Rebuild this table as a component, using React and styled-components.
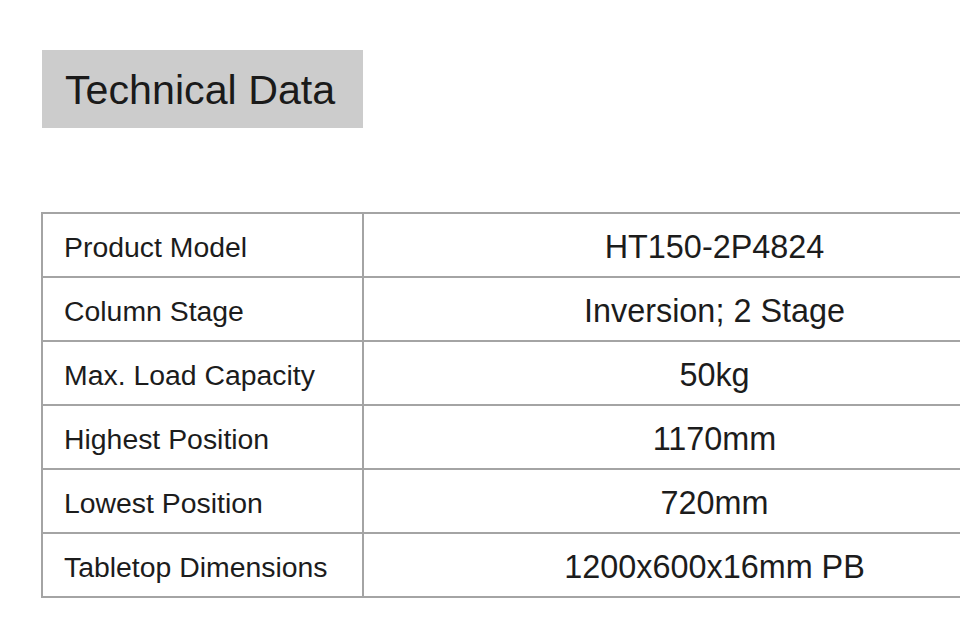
import styled, { createGlobalStyle } from 'styled-components';

const GlobalStyle = createGlobalStyle`
  html, body {
    margin: 0;
    padding: 0;
    background: #ffffff;
    overflow: hidden;
  }
  body {
    font-family: "Liberation Sans", Arial, sans-serif;
    color: #1c1c1c;
  }
`;

const Page = styled.div`
  width: 960px;
  height: 642px;
  padding: 50px 0 0 41px;
  box-sizing: border-box;
  overflow: hidden;
`;

const TitleBox = styled.div`
  width: 321px;
  height: 78px;
  margin-left: 1px;
  background: #cccccc;
  display: flex;
  align-items: center;
  padding: 2px 0 0 23px;
  box-sizing: border-box;
  font-size: 41.2px;
  color: #1a1a1a;
`;

const Table = styled.table`
  margin-top: 84px;
  border-collapse: collapse;
  width: 1026px;
  table-layout: fixed;
`;

const Row = styled.tr`
  height: 64px;
`;

const Cell = styled.td`
  border: 2px solid #a4a4a4;
  padding: 4px 0 0 0;
  vertical-align: middle;
  white-space: nowrap;
  ${({ $value }) =>
    $value
      ? `
    text-align: center;
    font-size: 32.4px;
  `
      : `
    width: 321px;
    box-sizing: border-box;
    padding-left: 21px;
    font-size: 28.4px;
  `}
`;

const SPECS = [
  ['Product Model', 'HT150-2P4824'],
  ['Column Stage', 'Inversion; 2 Stage'],
  ['Max. Load Capacity', '50kg'],
  ['Highest Position', '1170mm'],
  ['Lowest Position', '720mm'],
  ['Tabletop Dimensions', '1200x600x16mm PB'],
];

export default function App() {
  return (
    <>
      <GlobalStyle />
      <Page>
        <TitleBox>Technical Data</TitleBox>
        <Table>
          <tbody>
            {SPECS.map(([label, value]) => (
              <Row key={label}>
                <Cell>{label}</Cell>
                <Cell $value>{value}</Cell>
              </Row>
            ))}
          </tbody>
        </Table>
      </Page>
    </>
  );
}
